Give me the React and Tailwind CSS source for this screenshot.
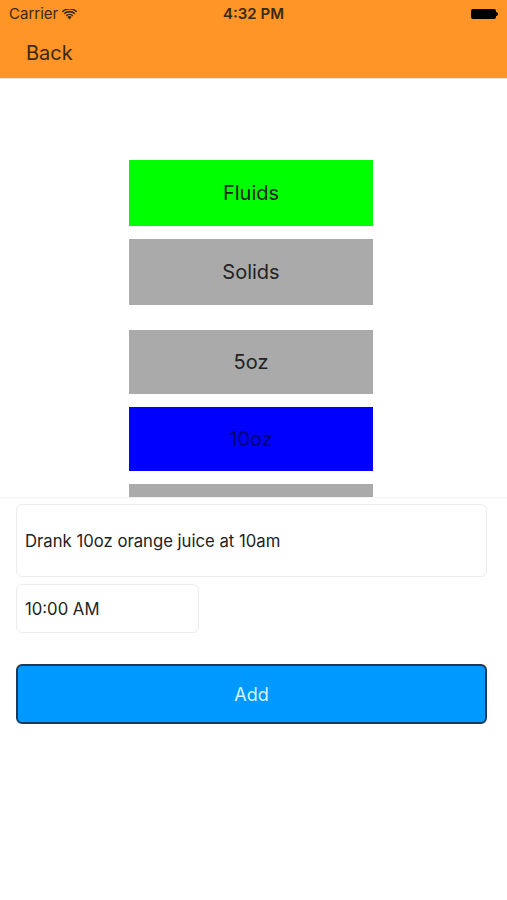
import { useState } from "react"

function Wifi() {
    return (
        <svg width="15" height="11" viewBox="0 0 15 11" className="ml-1">
            <path d="M7.5 10.5 L5.3 8.1 A3.2 3.2 0 0 1 9.7 8.1 Z" fill="#3a2a12" />
            <path d="M3.6 6.3 A5.6 5.6 0 0 1 11.4 6.3 L10.3 7.4 A4.1 4.1 0 0 0 4.7 7.4 Z" fill="#3a2a12" />
            <path d="M1.6 4.2 A8.5 8.5 0 0 1 13.4 4.2 L12.3 5.3 A7 7 0 0 0 2.7 5.3 Z" fill="#3a2a12" />
            <path d="M-0.2 2.3 A11 11 0 0 1 15.2 2.3 L14.2 3.3 A9.6 9.6 0 0 0 0.8 3.3 Z" fill="#3a2a12" />
        </svg>
    )
}

function Battery() {
    return (
        <div className="flex items-center">
            <div className="w-[25px] h-[10px] rounded-[2px] bg-black" />
            <div className="w-[2px] h-[4px] bg-black rounded-r-sm" />
        </div>
    )
}

export default function App() {
    const [note, setNote] = useState("Drank 10oz orange juice at 10am")
    const [kind, setKind] = useState("Fluids")
    const [size, setSize] = useState("10oz")

    return (
        <div className="w-[507px] h-[900px] bg-white font-['Inter','Liberation_Sans',sans-serif] text-[#222]">
            {/* 顶部栏 */}
            <div className="bg-[#ff9427] border-b border-[#e6e0d8] h-[79px]">
                <div className="relative flex items-center justify-between h-[28px] pl-[9px] pr-[9px] text-[15px] text-[#3a2a12]">
                    <div className="flex items-center">
                        <span>Carrier</span>
                        <Wifi />
                    </div>
                    <span className="absolute left-0 right-0 text-center font-semibold pointer-events-none">4:32 PM</span>
                    <Battery />
                </div>
                <div className="flex items-center h-[50px] pl-[26px] text-[20px] text-[#3a2a12]">Back</div>
            </div>

            {/* 选择按钮 */}
            <div className="h-[419px] overflow-hidden border-b border-[#f2f2f2] flex flex-col items-start pl-[129px] pt-[81px]">
                <button onClick={() => setKind("Fluids")} className={`shrink-0 w-[244px] h-[66px] text-[20px] ${kind === "Fluids" ? "bg-[#00ff00]" : "bg-[#aaaaaa]"}`}>Fluids</button>
                <button onClick={() => setKind("Solids")} className={`shrink-0 w-[244px] h-[66px] mt-[13px] text-[20px] ${kind === "Solids" ? "bg-[#00ff00]" : "bg-[#aaaaaa]"}`}>Solids</button>
                <button onClick={() => setSize("5oz")} className={`shrink-0 w-[244px] h-[64px] mt-[25px] text-[20px] ${size === "5oz" ? "bg-[#0000ff] text-[#000070]" : "bg-[#aaaaaa]"}`}>5oz</button>
                <button onClick={() => setSize("10oz")} className={`shrink-0 w-[244px] h-[64px] mt-[13px] text-[20px] ${size === "10oz" ? "bg-[#0000ff] text-[#000070]" : "bg-[#aaaaaa]"}`}>10oz</button>
                <button onClick={() => setSize("15oz")} aria-label="15oz" className={`shrink-0 w-[244px] h-[64px] mt-[13px] ${size === "15oz" ? "bg-[#0000ff]" : "bg-[#aaaaaa]"}`} />
            </div>

            {/* 输入区 */}
            <div className="px-[16px] pt-[6px] flex flex-col">
                <input value={note} onChange={e => setNote(e.target.value)} className="h-[73px] w-[471px] border border-[#ececec] rounded-[6px] px-[8px] text-[16.7px] text-[#222] outline-none" />
                <input defaultValue="10:00 AM" className="mt-[7px] h-[49px] w-[183px] border border-[#ececec] rounded-[6px] px-[8px] text-[16.7px] text-[#222] outline-none" />
                <button className="mt-[31px] h-[60px] w-[471px] bg-[#0099ff] border-2 border-[#1b3a5a] rounded-[6px] text-[18px] text-[#d8f2ff]">Add</button>
            </div>
        </div>
    )
}
